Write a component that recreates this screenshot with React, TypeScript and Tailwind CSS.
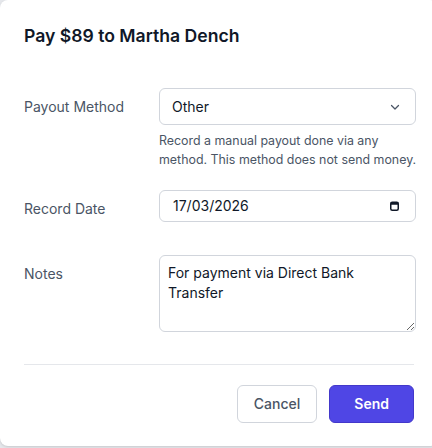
import React from "react";

function Chevron() {
  return (
    <svg className="h-3 w-3 text-gray-600" fill="none" viewBox="0 0 24 24" stroke="currentColor" strokeWidth={2.5}>
      <path strokeLinecap="round" strokeLinejoin="round" d="M5 9l7 7 7-7" />
    </svg>
  );
}

function CalendarGlyph() {
  return (
    <svg width="9" height="10" viewBox="0 0 9 10" className="text-gray-900">
      <rect x="0.75" y="1.25" width="7.5" height="8" rx="1.5" fill="none" stroke="currentColor" strokeWidth="1.5" />
      <rect x="0.75" y="1.25" width="7.5" height="2.5" fill="currentColor" />
    </svg>
  );
}

function Label({ children }: { children: React.ReactNode }) {
  return <div className="pt-[9px] text-sm leading-5 text-gray-600">{children}</div>;
}

export default function App() {
  return (
    <div className="h-screen w-full overflow-hidden bg-gray-200 font-['Inter',sans-serif]">
      <div className="h-[446px] w-[438px] rounded-lg bg-white px-6 pt-[22px] shadow">
        {/* Header */}
        <h2 className="text-[17.6px] leading-7 font-semibold text-gray-900">Pay $89 to Martha Dench</h2>

        {/* Form */}
        <div className="mt-[38px] grid grid-cols-[135px_1fr]">
          <Label>Payout Method</Label>
          <div>
            <div className="flex h-[37px] items-center justify-between rounded-md border border-gray-300 bg-white pl-3 pr-3.5">
              <span className="text-sm text-gray-900">Other</span>
              <Chevron />
            </div>
            <p className="mt-1.5 whitespace-nowrap text-[12.4px] leading-[19px] text-gray-600">
              Record a manual payout done via any
              <br />
              method. This method does not send money.
            </p>
          </div>

          <div className="col-span-2 h-[21px]" />

          <Label>Record Date</Label>
          <div className="flex h-8 items-center justify-between rounded-md border border-gray-300 bg-white pl-[13px] pr-4">
            <span className="text-sm text-gray-900">17/03/2026</span>
            <CalendarGlyph />
          </div>

          <div className="col-span-2 h-[33px]" />

          <Label>Notes</Label>
          <textarea
            className="block h-[77px] w-full rounded-md border border-gray-300 px-2 py-[7px] text-sm leading-5 text-gray-900 outline-none"
            defaultValue="For payment via Direct Bank Transfer"
          />
        </div>

        {/* Footer */}
        <div className="mt-8 border-t border-gray-200 pt-5">
          <div className="flex justify-end gap-3">
            <button className="h-[38px] rounded-md border border-gray-300 bg-white px-4 text-sm font-medium text-gray-600">
              Cancel
            </button>
            <button className="h-[38px] rounded-md border border-[#4338ca] bg-[#4f46e5] px-6 text-sm font-semibold text-white">
              Send
            </button>
          </div>
        </div>
      </div>
    </div>
  );
}
